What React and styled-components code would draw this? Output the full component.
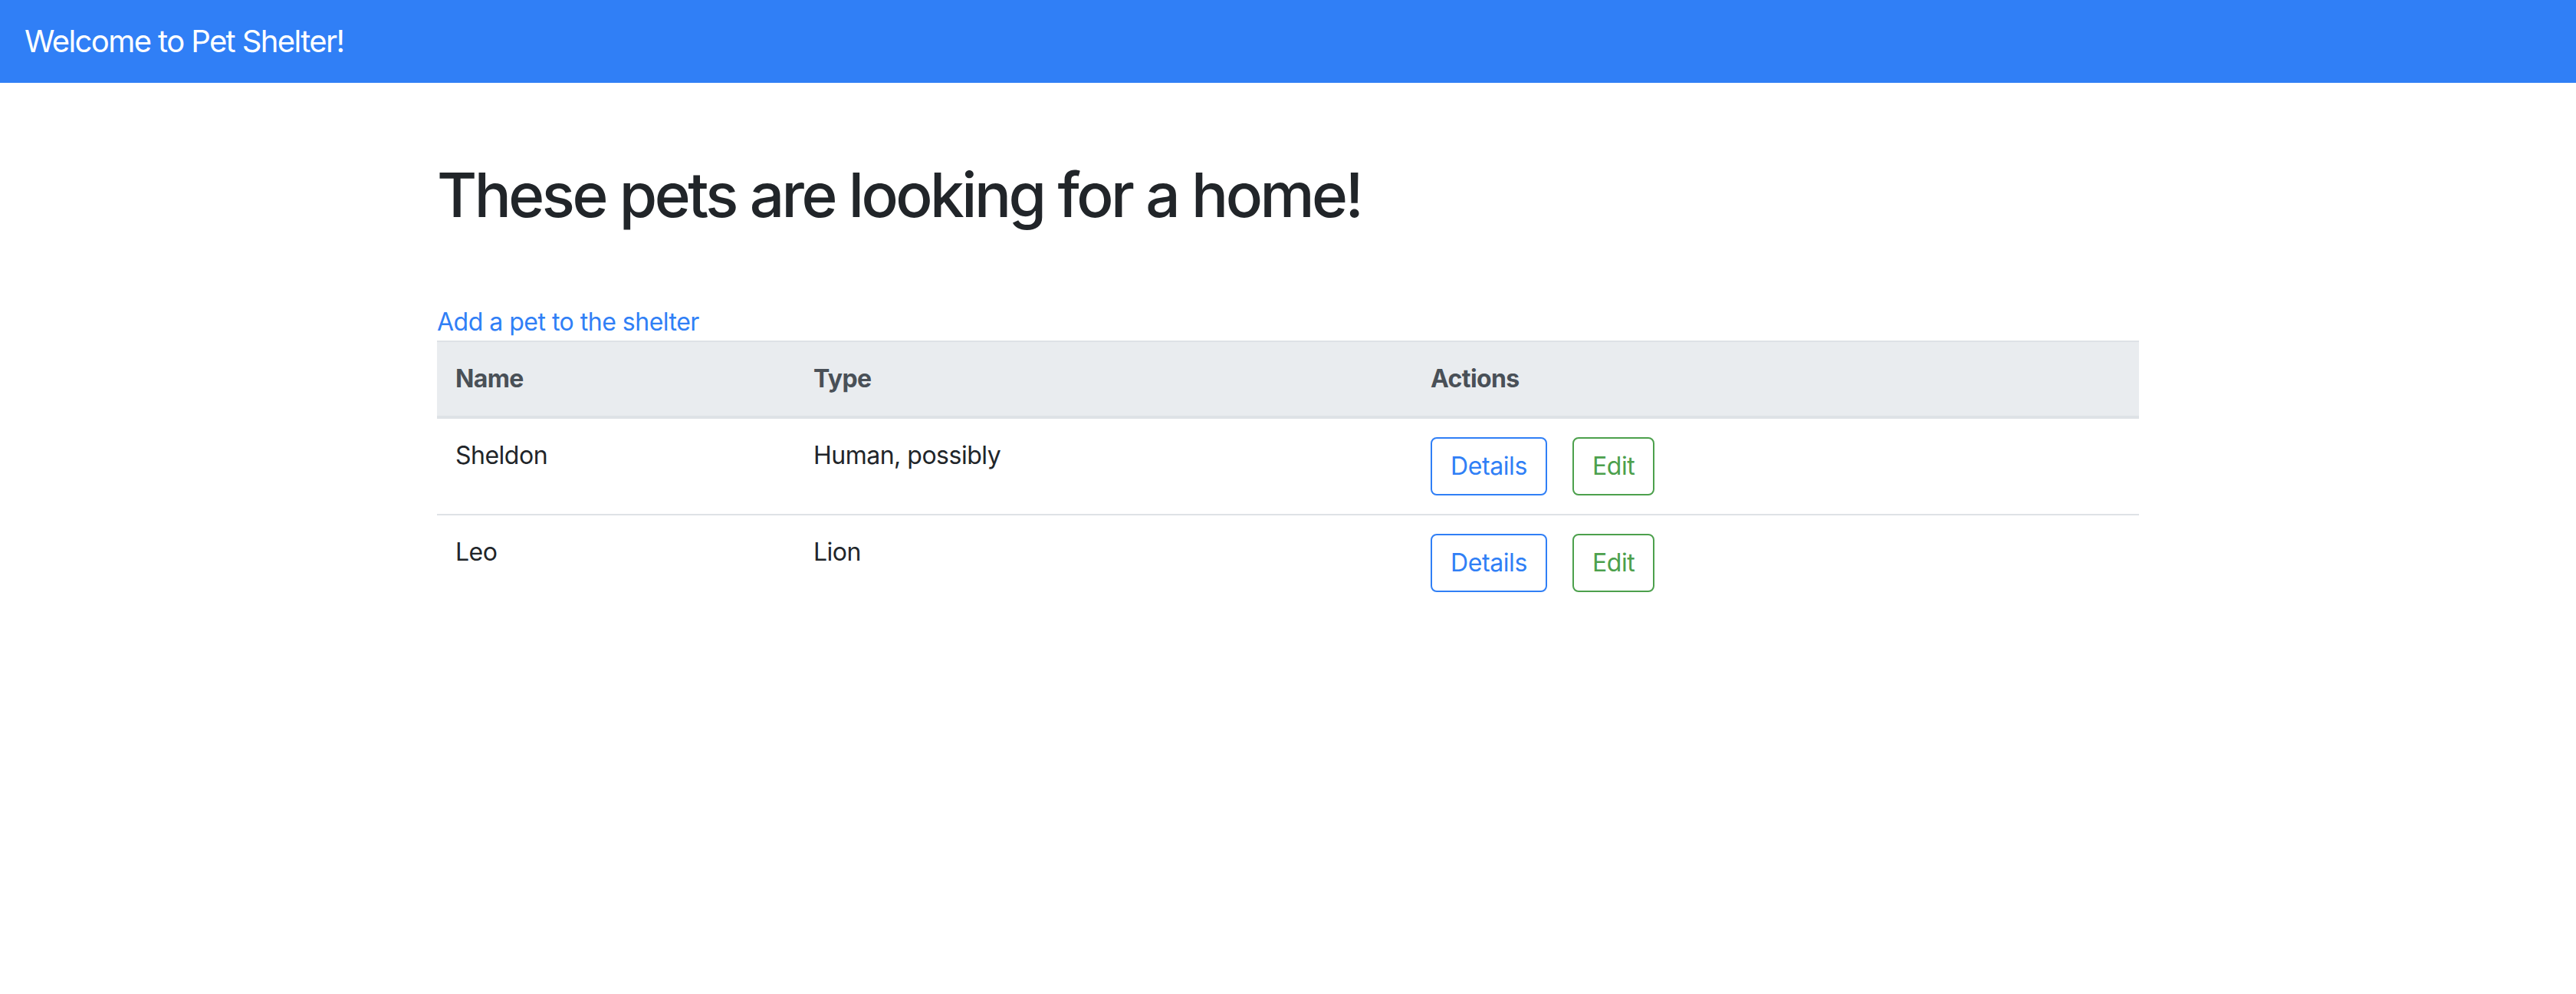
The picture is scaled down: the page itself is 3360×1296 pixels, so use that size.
import React from 'react';
import styled, { createGlobalStyle } from 'styled-components';

const GlobalStyle = createGlobalStyle`
  *, *::before, *::after {
    box-sizing: border-box;
  }

  body {
    margin: 0;
    background: #fff;
    font-family: Inter, 'Liberation Sans', Arial, sans-serif;
    color: #212529;
  }
`;

const NavBar = styled.nav`
  background-color: #307ff6;
  padding: 24px 32px;
  display: flex;
  align-items: center;
`;

const Brand = styled.div`
  color: #fff;
  font-size: 40px;
  line-height: 60px;
  font-weight: 400;
  letter-spacing: -1.6px;
`;

const Container = styled.main`
  width: 2220px;
  margin: 0 auto;
  padding-top: 98px;
`;

const Title = styled.h1`
  margin: 0 0 94px;
  font-size: 80px;
  line-height: 96px;
  font-weight: 500;
  letter-spacing: -3.5px;
  color: #212529;
`;

const AddLink = styled.a`
  display: block;
  color: #307ff6;
  font-size: 32px;
  line-height: 48px;
  text-decoration: none;
  letter-spacing: -0.5px;
`;

const Table = styled.table`
  width: 100%;
  table-layout: fixed;
  border-collapse: collapse;
  font-size: 32px;
  line-height: 48px;
`;

const Th = styled.th`
  width: ${(p) => p.$width || 'auto'};
  padding: 24px;
  text-align: left;
  font-weight: 700;
  color: #495057;
  background-color: #e9ecef;
  border-top: 2px solid #dee2e6;
  border-bottom: 4px solid #dee2e6;
  letter-spacing: -0.6px;
`;

const Td = styled.td`
  padding: 24px;
  vertical-align: top;
  border-top: 2px solid #dee2e6;
  color: #212529;
  letter-spacing: -0.5px;
`;

const Actions = styled.div`
  display: flex;
  gap: 33px;
`;

const OutlineButton = styled.button`
  font-family: inherit;
  font-size: 32px;
  line-height: 48px;
  padding: 12px 24px;
  background: #fff;
  border: 2px solid ${(p) => p.$color};
  color: ${(p) => p.$color};
  border-radius: 8px;
  cursor: pointer;
  letter-spacing: -0.4px;
`;

const pets = [
  { name: 'Sheldon', type: 'Human, possibly' },
  { name: 'Leo', type: 'Lion' },
];

const App = () => (
  <>
    <GlobalStyle />
    <NavBar>
      <Brand>Welcome to Pet Shelter!</Brand>
    </NavBar>
    <Container>
      <Title>These pets are looking for a home!</Title>
      <AddLink href="#">Add a pet to the shelter</AddLink>
      <Table>
        <thead>
          <tr>
            <Th $width="467px">Name</Th>
            <Th $width="805px">Type</Th>
            <Th>Actions</Th>
          </tr>
        </thead>
        <tbody>
          {pets.map((pet) => (
            <tr key={pet.name}>
              <Td>{pet.name}</Td>
              <Td>{pet.type}</Td>
              <Td>
                <Actions>
                  <OutlineButton $color="#307ff6">Details</OutlineButton>
                  <OutlineButton $color="#4ca04c">Edit</OutlineButton>
                </Actions>
              </Td>
            </tr>
          ))}
        </tbody>
      </Table>
    </Container>
  </>
);

export default App;
